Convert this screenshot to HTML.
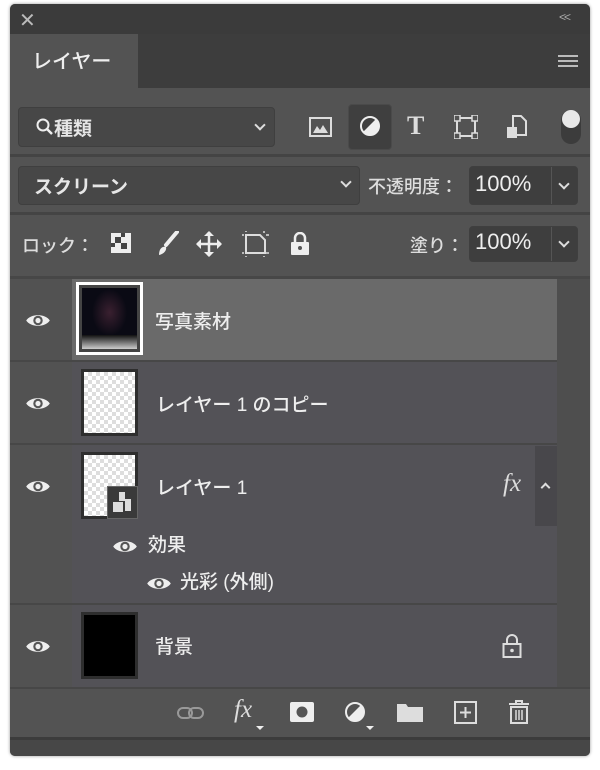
<!DOCTYPE html>
<html><head><meta charset="utf-8"><style>
*{margin:0;padding:0;box-sizing:border-box}
body{width:600px;height:770px;background:#fff;position:relative;overflow:hidden;font-family:"Liberation Sans","Noto Sans CJK JP",sans-serif;color:#e6e6e6}
.a{position:absolute}
.t{position:absolute;white-space:nowrap;font-weight:500}
.dd{position:absolute;background:#474747;border:1px solid #3f3f3f;border-radius:4px}
.chev{position:absolute;width:8px;height:8px;border-right:2px solid #ddd;border-bottom:2px solid #ddd;transform:rotate(45deg)}
.sep{position:absolute;left:10px;width:580px;height:3px;background:#444}
.row{position:absolute;left:72px;width:485px;background:#535257}
.eye{position:absolute;width:26px;height:17px}
.ck{background-color:#fff;background-image:linear-gradient(45deg,#ddd 25%,transparent 25%,transparent 75%,#ddd 75%),linear-gradient(45deg,#ddd 25%,transparent 25%,transparent 75%,#ddd 75%);background-size:8px 8px;background-position:0 0,4px 4px}
</style></head><body>
<div class="a" style="left:10px;top:4px;width:580px;height:752px;background:#535353;border-radius:5px;box-shadow:0 0 3px rgba(0,0,0,.4)"></div>
<div class="a" style="left:10px;top:4px;width:580px;height:30px;background:#3b3b3b;border-radius:5px 5px 0 0"></div>
<div class="t" style="left:19px;top:8px;font-size:20px;color:#bbb">✕</div>
<div class="t" style="left:559px;top:10px;font-size:12px;color:#aaa;letter-spacing:-2px">&lt;&lt;</div>
<div class="a" style="left:138px;top:34px;width:452px;height:54px;background:#3d3d3d"></div>
<div class="t" style="left:32px;top:45px;font-size:20px;color:#eee">レイヤー</div>
<div class="a" style="left:558px;top:55px;width:20px;height:12px;border-top:2px solid #bbb;border-bottom:2px solid #bbb"></div>
<div class="a" style="left:558px;top:60px;width:20px;height:2px;background:#bbb"></div>
<div class="dd" style="left:18px;top:107px;width:257px;height:40px"></div>
<svg class="a" style="left:35px;top:117px" width="20" height="20"><circle cx="8" cy="8" r="5.5" stroke="#eee" stroke-width="2" fill="none"/><path d="M12 12l5 5" stroke="#eee" stroke-width="2.5"/></svg>
<div class="t" style="left:54px;top:114px;font-size:19px;font-weight:bold">種類</div>
<div class="chev" style="left:256px;top:121px"></div>
<svg class="a" style="left:309px;top:116px" width="24" height="22"><rect x="1" y="2" width="21" height="18" stroke="#ddd" stroke-width="2" fill="none"/><path d="M4 17l4-7 3 4 3-5 5 8z" fill="#ddd"/></svg>
<div class="a" style="left:348px;top:104px;width:44px;height:46px;background:#3f3f3f;border:1px solid #4a4a4a;border-radius:4px"></div>
<svg class="a" style="left:359px;top:115px" width="22" height="22"><circle cx="11" cy="11" r="9" stroke="#eee" stroke-width="2" fill="none"/><path d="M4 17L17 4A9 9 0 0 1 4 17z" fill="#eee"/></svg>
<div class="t" style="left:407px;top:111px;font-size:26px;font-family:'Liberation Serif',serif;font-weight:bold;color:#ddd">T</div>
<svg class="a" style="left:454px;top:115px" width="24" height="24"><rect x="3" y="3" width="18" height="18" stroke="#ddd" stroke-width="2" fill="none"/><rect x="0" y="0" width="6" height="6" fill="#535353" stroke="#ddd" stroke-width="1.5"/><rect x="18" y="0" width="6" height="6" fill="#535353" stroke="#ddd" stroke-width="1.5"/><rect x="0" y="18" width="6" height="6" fill="#535353" stroke="#ddd" stroke-width="1.5"/><rect x="18" y="18" width="6" height="6" fill="#535353" stroke="#ddd" stroke-width="1.5"/></svg>
<svg class="a" style="left:505px;top:115px" width="22" height="24"><path d="M8 1h8l5 5v14H8z" fill="none" stroke="#ddd" stroke-width="2"/><rect x="2" y="12" width="10" height="11" fill="#ddd"/></svg>
<div class="a" style="left:561px;top:110px;width:20px;height:34px;border-radius:10px;background:#3c3c3c"></div>
<div class="a" style="left:562px;top:110px;width:18px;height:18px;border-radius:9px;background:#e8e8e8"></div>
<div class="sep" style="top:154px"></div>
<div class="dd" style="left:18px;top:166px;width:342px;height:39px"></div>
<div class="t" style="left:34px;top:172px;font-size:19px;font-weight:bold">スクリーン</div>
<div class="chev" style="left:342px;top:178px"></div>
<div class="t" style="left:368px;top:173px;font-size:18px;color:#ddd">不透明度：</div>
<div class="dd" style="left:469px;top:166px;width:109px;height:39px;background:#3e3e3e"></div>
<div class="a" style="left:551px;top:167px;width:1px;height:37px;background:#555"></div>
<div class="t" style="left:475px;top:171px;font-size:22px;color:#eee">100%</div>
<div class="chev" style="left:560px;top:180px"></div>
<div class="sep" style="top:212px"></div>
<div class="t" style="left:22px;top:232px;font-size:18px;color:#ddd">ロック：</div>
<svg class="a" style="left:110px;top:232px" width="22" height="22"><rect x="1" y="1" width="20" height="20" fill="#eee"/><rect x="5" y="5" width="6" height="6" fill="#444"/><rect x="11" y="11" width="6" height="6" fill="#444"/><rect x="11" y="1" width="4" height="4" fill="#444"/><rect x="1" y="11" width="4" height="4" fill="#444"/></svg>
<svg class="a" style="left:155px;top:231px" width="24" height="26"><path d="M22 1L11 14" stroke="#eee" stroke-width="4" stroke-linecap="round"/><path d="M4 24c0-6 3-9 7-8 1 3-2 7-7 8z" fill="#eee"/></svg>
<svg class="a" style="left:196px;top:231px" width="26" height="26"><path d="M13 1v24M1 13h24" stroke="#eee" stroke-width="2.5"/><path d="M13 0l-5 5h10zM13 26l-5-5h10zM0 13l5-5v10zM26 13l-5-5v10z" fill="#eee"/></svg>
<svg class="a" style="left:242px;top:231px" width="28" height="26"><path d="M4 4h14l5 5v13H4z" fill="none" stroke="#ddd" stroke-width="2"/><path d="M0 4h2M24 4h3M0 22h2M24 22h3M4 0v1M22 0v2M4 25v1M22 25v1" stroke="#ddd" stroke-width="1.5"/></svg>
<svg class="a" style="left:290px;top:232px" width="20" height="24"><path d="M5 10V6a5 5 0 0 1 10 0v4" stroke="#eee" stroke-width="2.5" fill="none"/><rect x="1" y="10" width="18" height="13" rx="1" fill="#eee"/><circle cx="10" cy="16" r="2" fill="#535353"/></svg>
<div class="t" style="left:410px;top:232px;font-size:18px;color:#ddd">塗り：</div>
<div class="dd" style="left:469px;top:226px;width:109px;height:36px;background:#3e3e3e"></div>
<div class="a" style="left:551px;top:227px;width:1px;height:34px;background:#555"></div>
<div class="t" style="left:475px;top:229px;font-size:22px;color:#eee">100%</div>
<div class="chev" style="left:560px;top:238px"></div>
<div class="a" style="left:10px;top:276px;width:580px;height:3px;background:#474747"></div>
<div class="a" style="left:10px;top:279px;width:62px;height:408px;background:#525252"></div>
<div class="a" style="left:557px;top:279px;width:33px;height:408px;background:#4e4e4e"></div>
<div class="row" style="top:279px;height:81px;background:#6a6a6a"></div>
<div class="row" style="top:362px;height:81px"></div>
<div class="row" style="top:445px;height:158px"></div>
<div class="row" style="top:605px;height:82px"></div>
<div class="a" style="left:10px;top:360px;width:547px;height:2px;background:#474747"></div>
<div class="a" style="left:10px;top:443px;width:547px;height:2px;background:#474747"></div>
<div class="a" style="left:10px;top:603px;width:547px;height:2px;background:#474747"></div>
<div class="a" style="left:535px;top:446px;width:22px;height:80px;background:#48474b"></div>
<svg width="0" height="0" style="position:absolute"><defs><symbol id="e" viewBox="0 0 22 14"><path d="M1 7C5 1 17 1 21 7C17 13 5 13 1 7z" fill="#eee"/><circle cx="11" cy="7" r="4" fill="#555"/><circle cx="11" cy="7" r="2.2" fill="#eee"/></symbol></defs></svg>
<svg class="eye" style="left:25px;top:312px"><use href="#e"/></svg>
<svg class="eye" style="left:25px;top:395px"><use href="#e"/></svg>
<svg class="eye" style="left:25px;top:478px"><use href="#e"/></svg>
<svg class="eye" style="left:25px;top:638px"><use href="#e"/></svg>
<svg class="eye" style="left:112px;top:538px"><use href="#e"/></svg>
<svg class="eye" style="left:146px;top:575px"><use href="#e"/></svg>
<div class="a" style="left:76px;top:282px;width:67px;height:73px;background:#fff;padding:3px"><div style="width:100%;height:100%;background:#444;padding:3px"><div style="width:100%;height:100%;background:radial-gradient(ellipse at 50% 40%,#3a2030 0,#0a0a14 45%),#000;position:relative"><div style="position:absolute;left:0;right:0;bottom:0;height:14px;background:linear-gradient(#111,#ccc)"></div></div></div></div>
<div class="a ck" style="left:81px;top:369px;width:57px;height:67px;border:3px solid #2e2e2e"></div>
<div class="a ck" style="left:81px;top:452px;width:57px;height:67px;border:3px solid #2e2e2e"></div>
<div class="a" style="left:107px;top:486px;width:31px;height:33px;background:#3a3a3a;border:1px solid #666"></div>
<svg class="a" style="left:112px;top:491px" width="20" height="22"><path d="M7 1h6v7h6v12H13V10H7z" fill="#ddd"/><rect x="1" y="11" width="10" height="10" fill="#ddd"/></svg>
<div class="a" style="left:81px;top:612px;width:57px;height:67px;background:#000;border:3px solid #2e2e2e"></div>
<div class="t" style="left:155px;top:307px;font-size:19px;color:#eee">写真素材</div>
<div class="t" style="left:156px;top:390px;font-size:19px;color:#eee">レイヤー 1 のコピー</div>
<div class="t" style="left:156px;top:473px;font-size:19px;color:#eee">レイヤー 1</div>
<div class="t" style="left:503px;top:470px;font-size:25px;font-style:italic;font-family:'Liberation Serif',serif;color:#ddd">fx</div>
<div class="chev" style="left:542px;top:484px;transform:rotate(-135deg);width:7px;height:7px"></div>
<div class="t" style="left:148px;top:530px;font-size:19px;color:#eee">効果</div>
<div class="t" style="left:180px;top:567px;font-size:19px;color:#eee">光彩 (外側)</div>
<div class="t" style="left:155px;top:632px;font-size:19px;color:#eee">背景</div>
<svg class="a" style="left:502px;top:633px" width="20" height="26"><path d="M5 11V7a5 5 0 0 1 10 0v4" stroke="#ddd" stroke-width="2" fill="none"/><rect x="1.5" y="11" width="17" height="13" fill="none" stroke="#ddd" stroke-width="2"/><circle cx="10" cy="17.5" r="1.8" fill="#ddd"/></svg>
<div class="a" style="left:10px;top:687px;width:580px;height:2px;background:#474747"></div>
<div class="a" style="left:10px;top:737px;width:580px;height:3px;background:#3c3c3c"></div>
<div class="a" style="left:10px;top:740px;width:580px;height:16px;background:#474747;border-radius:0 0 5px 5px"></div>
<svg class="a" style="left:176px;top:705px" width="30" height="16"><rect x="2" y="3" width="14" height="10" rx="5" stroke="#999" stroke-width="2" fill="none"/><rect x="13" y="3" width="14" height="10" rx="5" stroke="#999" stroke-width="2" fill="none"/></svg>
<div class="t" style="left:234px;top:696px;font-size:25px;font-style:italic;font-family:'Liberation Serif',serif;color:#ddd">fx</div>
<div class="a" style="left:256px;top:726px;border:4px solid transparent;border-top:4px solid #eee"></div>
<svg class="a" style="left:289px;top:701px" width="26" height="22"><rect x="1" y="1" width="24" height="20" rx="2" fill="#eee"/><circle cx="13" cy="11" r="5.5" fill="#555"/></svg>
<svg class="a" style="left:344px;top:701px" width="22" height="22"><circle cx="11" cy="11" r="9" stroke="#eee" stroke-width="2" fill="none"/><path d="M4 17L17 4A9 9 0 0 1 4 17z" fill="#eee"/></svg>
<div class="a" style="left:366px;top:726px;border:4px solid transparent;border-top:4px solid #eee"></div>
<svg class="a" style="left:396px;top:701px" width="28" height="22"><path d="M1 3h9l2 3h15v15H1z" fill="#ddd"/></svg>
<svg class="a" style="left:454px;top:701px" width="24" height="24"><rect x="1" y="1" width="21" height="21" stroke="#ddd" stroke-width="2" fill="none"/><path d="M11.5 6v11M6 11.5h11" stroke="#ddd" stroke-width="2"/></svg>
<svg class="a" style="left:508px;top:699px" width="22" height="26"><path d="M1 5h20M8 5V2h6v3" stroke="#ddd" stroke-width="2" fill="none"/><rect x="3" y="8" width="16" height="16" stroke="#ddd" stroke-width="2" fill="none"/><path d="M8 11v10M11 11v10M14 11v10" stroke="#ddd" stroke-width="1.5"/></svg>
</body></html>
